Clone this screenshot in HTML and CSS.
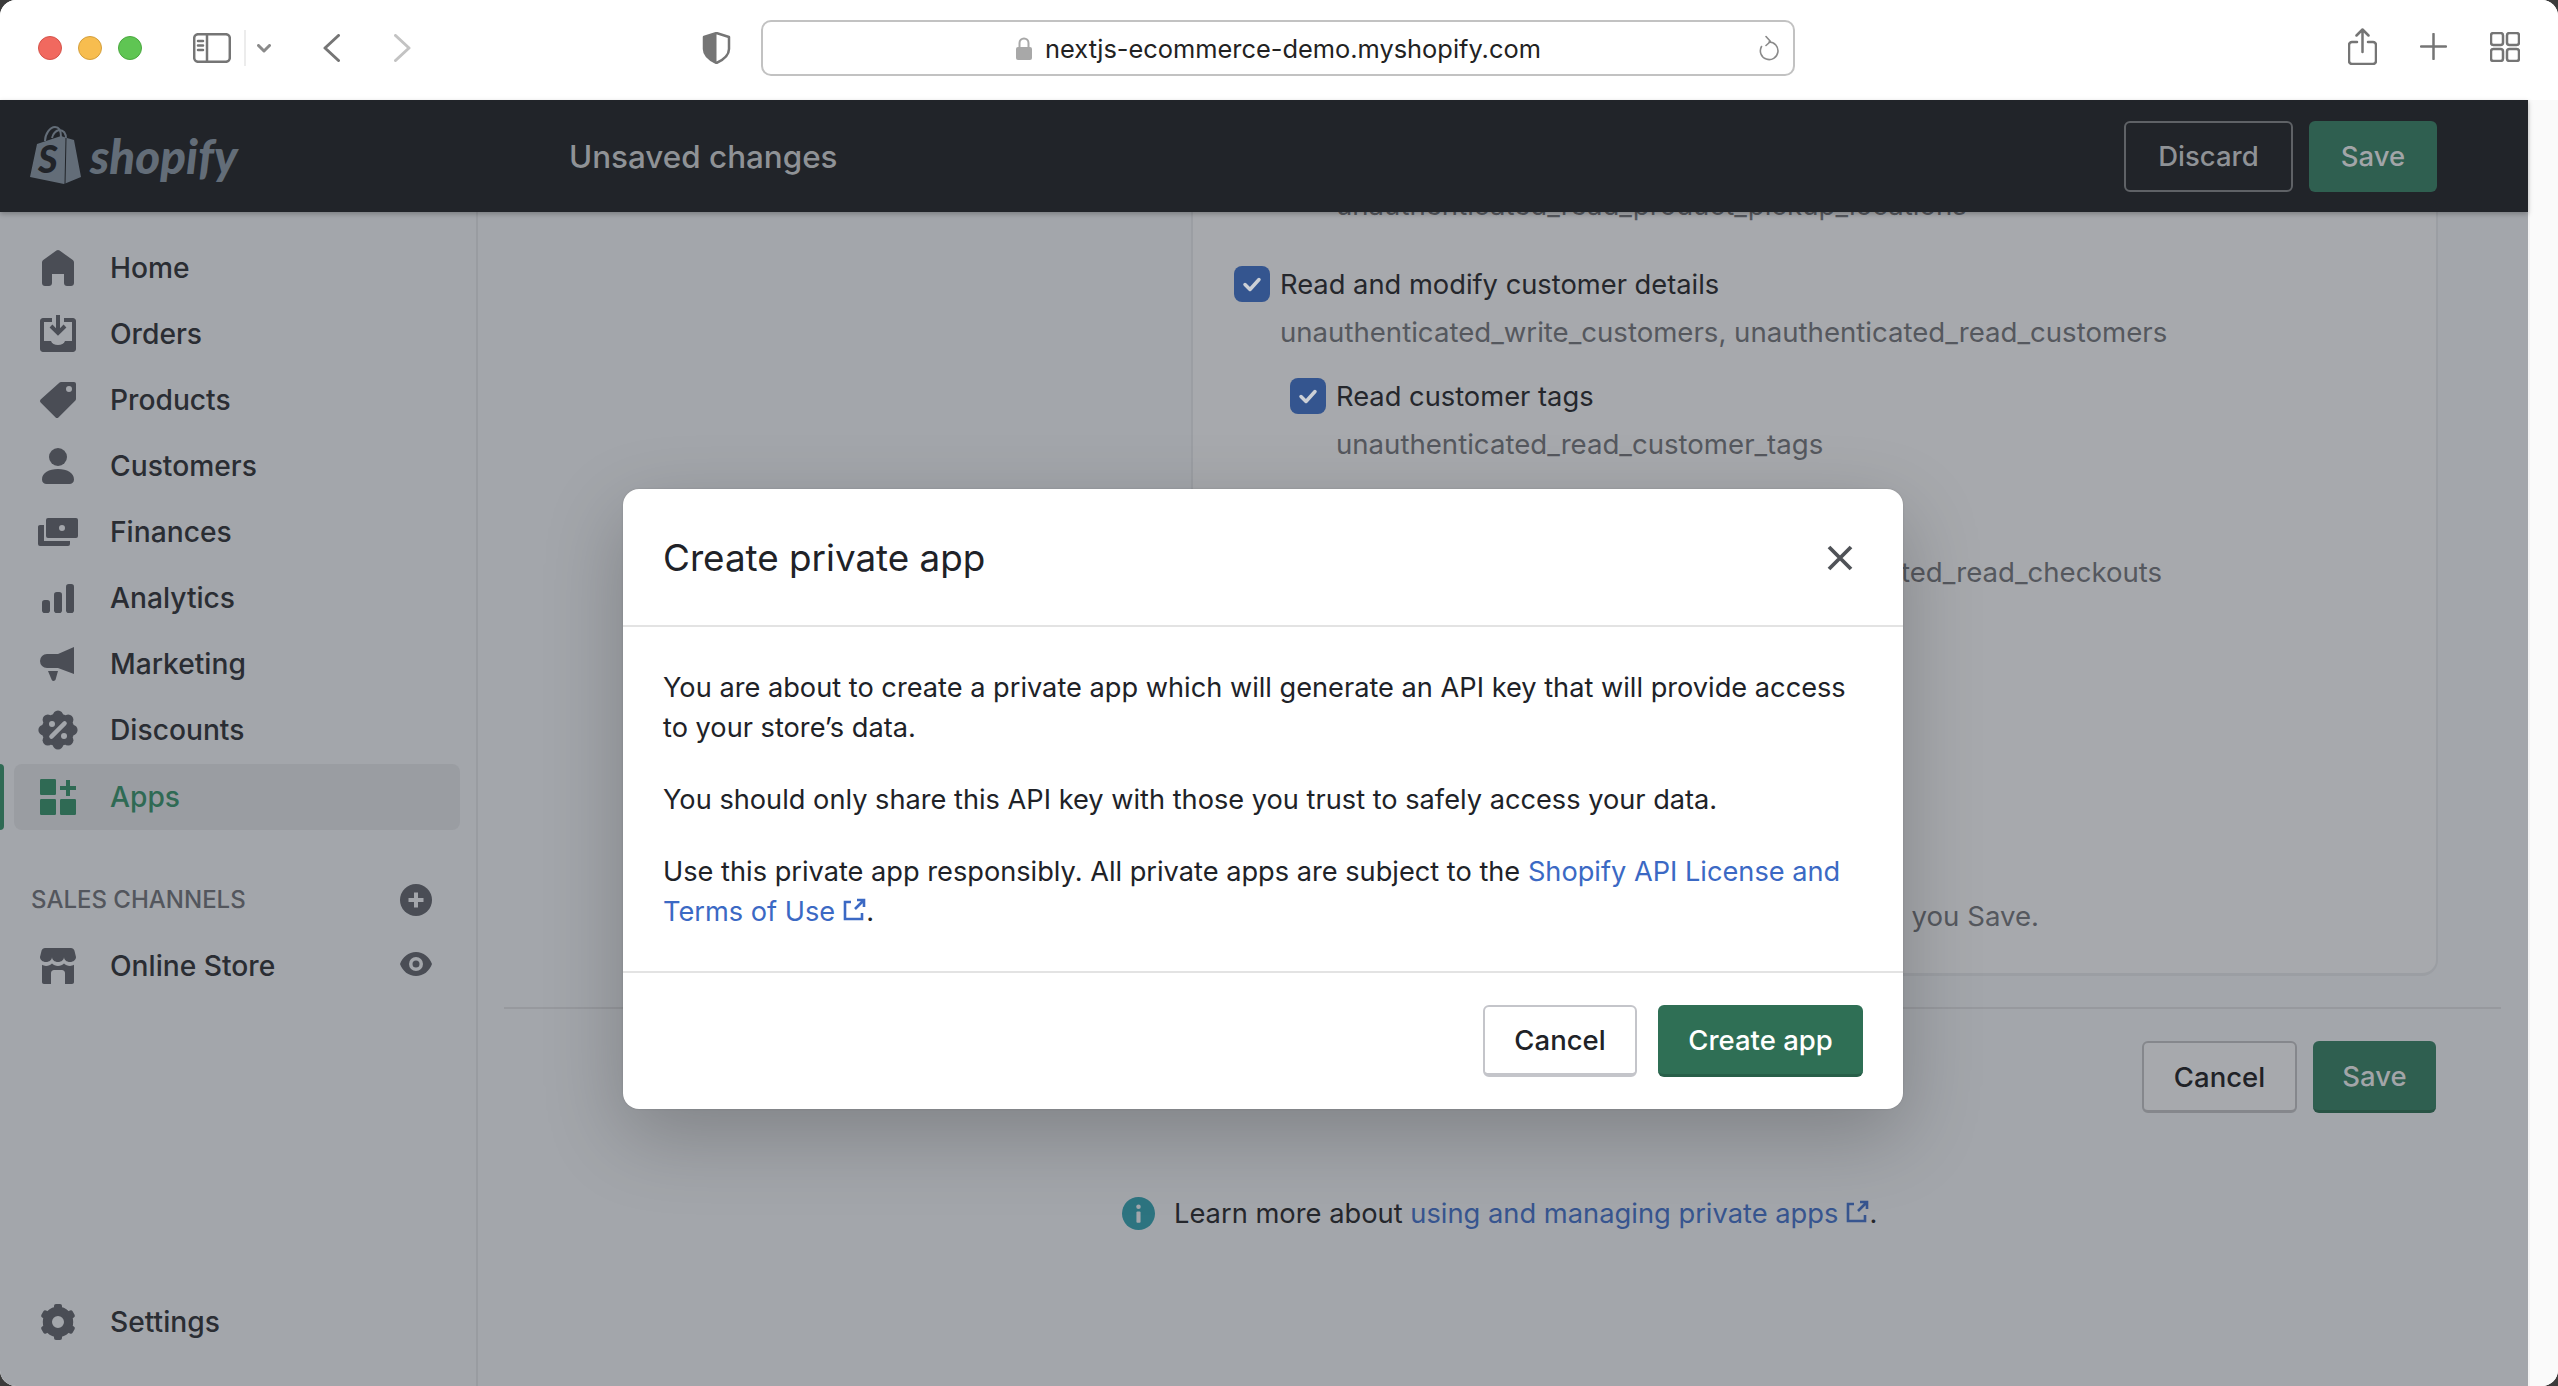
FILE: index.html
```html
<!DOCTYPE html>
<html lang="en">
<head>
  <meta charset="UTF-8" />
  <title>Create private app</title>
  <link rel="stylesheet" href="styles.css">
</head>
<body>
<div class="window">

  <!-- Safari toolbar -->
  <header class="toolbar">
    <div class="lights">
      <span class="light red"></span>
      <span class="light yellow"></span>
      <span class="light green"></span>
    </div>
    <svg class="tb-sidebar" viewBox="0 0 38 30"><rect x="1.2" y="1.2" width="35.6" height="27.6" rx="4"/><path d="M14 1.2v27.6M5 8h5M5 12.500h5M5 17h5"/></svg>
    <span class="tb-divider"></span>
    <svg class="tb-caret" viewBox="0 0 14 9"><path d="M1.500 1.500 7 7l5.500-5.500"/></svg>
    <svg class="tb-back" viewBox="0 0 17 28"><path d="M15.500 1.500 2 14l13.500 12.500"/></svg>
    <svg class="tb-forward" viewBox="0 0 17 28"><path d="M1.500 1.500 15 14 1.500 26.500"/></svg>
    <svg class="tb-shield" viewBox="0 0 29 32"><path class="shield-fill" d="M14.500 1 2 5v12c0 6 6 11 12.500 14z"/><path d="M14.500 1 27 5v12c0 6-6 11-12.500 14C8 28 2 23 2 17V5z"/></svg>
    <div class="urlbar">
      <div class="url">
        <svg class="url-lock" viewBox="0 0 16 23"><path class="lock-loop" d="M3.500 11V6a4.500 4.500 0 0 1 9 0v5"/><rect y="10" width="16" height="13" rx="2"/></svg>
        <span>nextjs-ecommerce-demo.myshopify.com</span>
      </div>
      <svg class="url-reload" viewBox="0 0 20 26"><path d="M10 7A8.800 8.800 0 1 1 2.500 11.500M7 1.500 11.500 6.500 7 10.500"/></svg>
    </div>
    <div class="tb-right">
      <svg class="tb-share" viewBox="0 0 29 37"><path d="M9 14H4a3 3 0 0 0-3 3v16a3 3 0 0 0 3 3h21a3 3 0 0 0 3-3V17a3 3 0 0 0-3-3h-5M14.500 24V2M8.500 7.500l6-6 6 6"/></svg>
      <svg class="tb-plus" viewBox="0 0 27 27"><path d="M13.500 1v25M1 13.500h25"/></svg>
      <svg class="tb-tabs" viewBox="0 0 30 30"><rect x="1" y="1" width="12" height="12" rx="2.500"/><rect x="17" y="1" width="12" height="12" rx="2.500"/><rect x="1" y="17" width="12" height="12" rx="2.500"/><rect x="17" y="17" width="12" height="12" rx="2.500"/></svg>
    </div>
  </header>

  <div class="page">
    <div class="app">

      <div class="topbar">
        <div class="logo">
          <svg class="logo-bag" viewBox="0 0 51 58">
            <path class="bag-handle" d="M15 15c0-7 5-14 10-14 4 0 6 4 6 10M22 12c1-4 3-7 7-8 5 0 7 4 7 9"/>
            <path class="bag-body" d="M7 18 31 10l6 2 7 2 7 37-17 7L0 51z"/>
            <path class="bag-seam" d="M36 12l-1 46"/>
            <text class="bag-s" x="8" y="47">S</text>
          </svg>
          <span class="logo-word">shopify</span>
        </div>
        <span class="topbar-title">Unsaved changes</span>
        <div class="topbar-actions">
          <button class="btn-discard">Discard</button>
          <button class="btn-save-top">Save</button>
        </div>
      </div>

      <div class="frame">
        <nav class="sidebar">
          <ul class="nav-list">
            <li class="nav-item">
              <svg class="icon" viewBox="0 0 20 20"><path d="M18 7.261V17.500c0 .841-.672 1.500-1.500 1.500h-2c-.828 0-1.500-.659-1.500-1.500V13H7v4.477C7 18.318 6.328 19 5.500 19h-2c-.828 0-1.500-.682-1.500-1.523V7.261a1.500 1.500 0 0 1 .615-1.210l6.590-4.820a1.481 1.481 0 0 1 1.590 0l6.590 4.820A1.500 1.500 0 0 1 18 7.260z"/></svg>
              Home
            </li>
            <li class="nav-item">
              <svg class="icon" viewBox="0 0 20 20"><path d="M2.500 2H7v2H3v9.500h3.500c.4 1.200 1.800 2 3.500 2s3.100-.8 3.500-2H17V4h-4V2h4.500c.8 0 1.500.7 1.500 1.500v14c0 .8-.7 1.500-1.500 1.500h-15C1.700 19 1 18.300 1 17.500v-14C1 2.700 1.700 2 2.500 2z"/><path d="M9 .5h2v6.600l1.800-1.800 1.400 1.400L10 10.900 5.800 6.700l1.400-1.400L9 7.100z"/></svg>
              Orders
            </li>
            <li class="nav-item">
              <svg class="icon" viewBox="0 0 20 20"><path fill-rule="evenodd" d="M18 1h-6.500a1 1 0 0 0-.7.300L1.300 9.800a1 1 0 0 0 0 1.400l7.500 7.500a1 1 0 0 0 1.400 0l8.500-8.500a1 1 0 0 0 .3-.7V2a1 1 0 0 0-1-1zm-2.500 5a1.500 1.500 0 1 1 0-3 1.500 1.500 0 0 1 0 3z"/></svg>
              Products
            </li>
            <li class="nav-item">
              <svg class="icon" viewBox="0 0 20 20"><circle cx="10" cy="5.500" r="4.500"/><path d="M10 11.500c-4.500 0-8 2-8 5.200C2 18.100 3 19 4.300 19h11.400c1.300 0 2.300-.9 2.300-2.300 0-3.200-3.500-5.200-8-5.200z"/></svg>
              Customers
            </li>
            <li class="nav-item">
              <svg class="icon" viewBox="0 0 20 20"><path fill-rule="evenodd" d="M5 3h14a1 1 0 0 1 1 1v8a1 1 0 0 1-1 1H5a1 1 0 0 1-1-1V4a1 1 0 0 1 1-1zm7 6.500a1.500 1.500 0 1 0 0-3 1.500 1.500 0 0 0 0 3z"/><path d="M0 7.500c0-.6.400-1 1-1h2v8h13v1.500a1 1 0 0 1-1 1H1a1 1 0 0 1-1-1z"/></svg>
              Finances
            </li>
            <li class="nav-item">
              <svg class="icon" viewBox="0 0 20 20"><rect x="2" y="11" width="4" height="6.500" rx="1.400"/><rect x="8" y="7" width="4" height="10.500" rx="1.400"/><rect x="14" y="3" width="4" height="14.500" rx="1.400"/></svg>
              Analytics
            </li>
            <li class="nav-item">
              <svg class="icon" viewBox="0 0 20 20"><path d="M18 1.500V15l-8-3H4.500a3.500 3.500 0 0 1 0-7H10z"/><path d="M5 13.500h5l-1.200 4.300c-.2.7-1.500 1-1.900.2z"/></svg>
              Marketing
            </li>
            <li class="nav-item">
              <svg class="icon" viewBox="0 0 20 20">
                <circle cx="10" cy="10" r="8.200"/>
                <circle cx="10" cy="2.800" r="2.600"/><circle cx="15.100" cy="4.900" r="2.600"/><circle cx="17.200" cy="10" r="2.600"/><circle cx="15.100" cy="15.100" r="2.600"/>
                <circle cx="10" cy="17.200" r="2.600"/><circle cx="4.900" cy="15.100" r="2.600"/><circle cx="2.800" cy="10" r="2.600"/><circle cx="4.900" cy="4.900" r="2.600"/>
                <path class="cut-line" d="M13.300 6.700l-6.600 6.600"/>
                <circle class="cut" cx="7" cy="7" r="1.500"/><circle class="cut" cx="13" cy="13" r="1.500"/>
              </svg>
              Discounts
            </li>
            <li class="nav-item active">
              <svg class="icon" viewBox="0 0 20 20"><rect x="1" y="1" width="8" height="8" rx=".6"/><rect x="1" y="11" width="8" height="8" rx=".6"/><rect x="11" y="11" width="8" height="8" rx=".6"/><path d="M14 1.500h2V4.500h3v2h-3v3h-2v-3h-3v-2h3z"/></svg>
              Apps
            </li>
          </ul>

          <div class="channels-head">
            <span>SALES CHANNELS</span>
            <svg class="side-icon" viewBox="0 0 32 32"><circle cx="16" cy="16" r="16"/><path class="cut-line" d="M16 8.500v15M8.500 16h15"/></svg>
          </div>
          <div class="nav-item channel">
            <svg class="icon" viewBox="0 0 20 20"><path d="M3.500 1h13c.8 0 1.400.5 1.700 1.200L19 5.500C19 6.900 17.700 8 16 8s-3-1.100-3-2.500C13 6.900 11.700 8 10 8S7 6.900 7 5.500C7 6.900 5.700 8 4 8S1 6.900 1 5.500l.8-3.300C2.100 1.500 2.700 1 3.500 1z"/><path d="M2 9.400c.6.300 1.300.6 2 .6 1.200 0 2.300-.5 3-1.200.7.7 1.800 1.200 3 1.200s2.300-.5 3-1.200c.7.7 1.800 1.200 3 1.200.7 0 1.400-.3 2-.6V18c0 .6-.4 1-1 1h-3.500v-5.500c0-.8-.7-1.500-1.500-1.500H8c-.8 0-1.500.7-1.500 1.500V19H3c-.6 0-1-.4-1-1z"/></svg>
            Online Store
            <svg class="side-icon eye" viewBox="0 0 32 24"><path fill-rule="evenodd" d="M16 0C8.500 0 2.500 5 0 12c2.500 7 8.500 12 16 12s13.500-5 16-12C29.500 5 23.500 0 16 0zm0 19a7 7 0 1 1 0-14 7 7 0 0 1 0 14zm0-3.500a3.500 3.500 0 1 0 0-7 3.500 3.500 0 0 0 0 7z"/></svg>
          </div>

          <div class="nav-item settings">
            <svg class="icon" viewBox="0 0 20 20">
              <circle class="gear-ring" cx="10" cy="10" r="5.300"/>
              <rect x="8" y="1" width="4" height="4" rx="1"/><rect x="8" y="15" width="4" height="4" rx="1"/>
              <rect x="8" y="1" width="4" height="4" rx="1" transform="rotate(60 10 10)"/><rect x="8" y="15" width="4" height="4" rx="1" transform="rotate(60 10 10)"/>
              <rect x="8" y="1" width="4" height="4" rx="1" transform="rotate(120 10 10)"/><rect x="8" y="15" width="4" height="4" rx="1" transform="rotate(120 10 10)"/>
            </svg>
            Settings
          </div>
        </nav>

        <main class="content">
          <section class="card">
            <p class="scope nested">unauthenticated_read_product_pickup_locations</p>

            <label class="check-row gap-first"><span class="checkbox"><svg viewBox="0 0 36 36"><path d="M11 18.500l5 5 9-10"/></svg></span>Read and modify customer details</label>
            <p class="scope">unauthenticated_write_customers, unauthenticated_read_customers</p>

            <label class="check-row nested-check"><span class="checkbox"><svg viewBox="0 0 36 36"><path d="M11 18.500l5 5 9-10"/></svg></span>Read customer tags</label>
            <p class="scope nested">unauthenticated_read_customer_tags</p>

            <p class="scope checkouts">unauthenticated_write_checkouts, unauthenticated_read_checkouts</p>

            <p class="scope save-note">when you Save.</p>
          </section>

          <div class="form-actions">
            <button class="btn btn-ghost">Cancel</button>
            <button class="btn btn-save">Save</button>
          </div>

          <p class="learn">
            <svg class="info" viewBox="0 0 32 32"><circle cx="16" cy="16" r="16"/><circle class="info-mark" cx="16" cy="9.500" r="2.200"/><rect class="info-mark" x="14" y="14" width="4" height="11" rx="1"/></svg>
            Learn more about&nbsp;<a class="link-dim">using and managing private apps<svg class="ext" viewBox="0 0 24 24"><path d="M9 4H3v17h17v-6M13 11 21.500 2.500M15 2h7v7"/></svg></a>.
          </p>
        </main>
      </div>
    </div>
    <div class="scrollbar"></div>
  </div>

  <!-- Modal -->
  <div class="modal">
    <div class="modal-head">
      <h2>Create private app</h2>
      <svg class="modal-close" viewBox="0 0 26 26"><path d="M2 2l22 22M24 2 2 24"/></svg>
    </div>
    <div class="modal-body">
      <p>You are about to create a private app which will generate an API key that will provide access to your store’s data.</p>
      <p>You should only share this API key with those you trust to safely access your data.</p>
      <p>Use this private app responsibly. All private apps are subject to the <a class="link">Shopify API License and</a><br><a class="link">Terms of Use<svg class="ext" viewBox="0 0 24 24"><path d="M9 4H3v17h17v-6M13 11 21.500 2.500M15 2h7v7"/></svg></a>.</p>
    </div>
    <div class="modal-foot">
      <button class="btn btn-cancel">Cancel</button>
      <button class="btn btn-create">Create app</button>
    </div>
  </div>

</div>
</body>
</html>
```

FILE: styles.css
```css
/* === Reset === */
* { margin:0; padding:0; box-sizing:border-box; }
html, body { width:100%; height:100%; background:#3b3b3b; overflow:hidden; }
body { font-family: Inter, "Liberation Sans", sans-serif; font-size:27px; color:#202227; }
button { font-family:inherit; cursor:pointer; }
ul { list-style:none; }

.window {
  position:relative;
  width:100%; height:100%;
  border-radius:16px;
  overflow:hidden;
  display:flex; flex-direction:column;
  background:#fff;
}

/* === Toolbar === */
.toolbar {
  height:100px; flex:none;
  display:flex; align-items:center;
  background:#fff;
  padding-left:38px;
  fill:none; stroke:#757575;
}
.lights { display:flex; gap:16px; margin-right:51px; margin-top:-4px; }
.light { width:24px; height:24px; border-radius:50%; border:1px solid; }
.red { background:#f1695f; border-color:#d5534a; }
.yellow { background:#f7bd4f; border-color:#d49f3c; }
.green { background:#5fc553; border-color:#4aa83f; }
.toolbar svg { flex:none; stroke-width:2.500; stroke-linecap:round; stroke-linejoin:round; margin-top:-4px; }
.tb-sidebar { width:38px; height:30px; }
.tb-divider { width:2px; height:36px; background:#ececec; margin:-4px 0 0 13px; }
.toolbar .tb-caret { width:14px; height:9px; margin-left:11px; stroke-width:3; stroke:#8a8a8a; }
.toolbar .tb-back { width:17px; height:28px; margin-left:52px; stroke-width:3; }
.toolbar .tb-forward { width:17px; height:28px; margin-left:54px; stroke:#c3c3c3; stroke-width:3; }
.tb-shield { width:29px; height:32px; margin-left:291px; }
.shield-fill { fill:#757575; stroke:none; }
.urlbar {
  width:1034px; height:56px;
  margin:-4px 0 0 30px;
  border:2px solid #c2c2c2;
  border-radius:10px;
  display:flex; align-items:center;
  padding-right:14px;
  stroke:#8a8a8a;
}
.url { flex:1; display:flex; align-items:center; justify-content:center; gap:13px; padding-left:35px; color:#222; font-size:25.400px; }
.toolbar .url-lock { width:16px; height:23px; margin-top:0; fill:#a8a8a8; stroke:none; }
.toolbar .lock-loop { fill:none; stroke:#a8a8a8; stroke-width:2; }
.toolbar .url-reload { width:20px; height:26px; margin-top:0; stroke-width:1.600; }
.tb-right { margin-left:auto; display:flex; align-items:center; gap:43px; padding-right:38px; }
.toolbar .tb-share { width:29px; height:37px; margin-top:-8px; }
.toolbar .tb-plus { width:27px; height:27px; margin-top:-8px; }
.toolbar .tb-tabs { width:30px; height:30px; margin-top:-6px; }

/* === Layout === */
.page { flex:1; display:flex; min-height:0; }
.app { flex:1; display:flex; flex-direction:column; min-width:0; }
.scrollbar { width:30px; flex:none; background:#fafafa; border-left:2px solid #f3f3f3; }
.frame { flex:1; display:flex; min-height:0; background:#a3a6ab; }

/* === Topbar === */
.topbar {
  position:relative; z-index:2;
  height:112px; flex:none;
  display:flex; align-items:center;
  background:#212429;
  box-shadow:0 2px 5px rgba(0,0,0,.25);
  padding-right:91px;
}
.logo { width:569px; display:flex; align-items:center; padding-left:30px; color:#636d78; }
.logo-bag { width:51px; height:58px; flex:none; margin-top:-2px; }
.bag-handle { fill:none; stroke:#636d78; stroke-width:2; }
.bag-body { fill:#636d78; }
.bag-seam { fill:none; stroke:#212429; stroke-width:1; }
.bag-s { font:italic 900 38px Lato, sans-serif; fill:#212429; }
.logo-word { margin-left:9px; font:italic 900 47.500px Lato, sans-serif; line-height:1; }
.topbar-title { padding-top:2px; font-size:31.400px; font-weight:500; color:#8f9296; }
.topbar-actions { margin-left:auto; display:flex; gap:16px; }
.topbar-actions button { height:71px; border-radius:6px; font-size:27.500px; font-weight:500; }
.btn-discard { width:169px; background:transparent; border:2px solid #5f6266; color:#8f9296; }
.btn-save-top { width:128px; background:#2f5f50; border:none; color:#a2a5a8; }

/* === Sidebar === */
.sidebar {
  width:478px; flex:none;
  display:flex; flex-direction:column;
  padding-top:23px;
  border-right:2px solid #999ca1;
}
.nav-item {
  position:relative;
  height:66px;
  margin:0 16px 0 14px;
  padding-left:24px;
  display:flex; align-items:center; gap:32px;
  font-size:28.200px; font-weight:500; color:#2a2d33;
}
.nav-list .nav-item:nth-child(n+7) { height:66.300px; }
.icon { width:40px; height:40px; flex:none; fill:#4a4d55; }
.cut { fill:#a3a6ab; }
.cut-line { fill:none; stroke:#a3a6ab; stroke-width:2.200; stroke-linecap:round; }
.gear-ring { fill:none; stroke:#4a4d55; stroke-width:4.600; }
.nav-list .active { background:#9a9da2; border-radius:8px; color:#2f6a54; height:63px; }
.active::before {
  content:""; position:absolute; left:-14px; top:0; bottom:0;
  width:4px; background:#2f6a54; border-radius:0 4px 4px 0;
}
.active .icon { fill:#2f6a54; }
.channels-head {
  display:flex; align-items:center; justify-content:space-between;
  margin-top:54px;
  padding:0 44px 0 31px;
  height:32px;
  font-size:24px; font-weight:500; color:#53565d;
}
.side-icon { width:32px; height:32px; fill:#4a4d55; flex:none; }
.side-icon .cut-line { stroke-width:4; stroke-linecap:butt; }
.channel { margin-top:17px; }
.eye { height:24px; margin-left:auto; margin-right:28px; margin-top:-4px; }
.settings { margin-top:auto; margin-bottom:31px; }

/* === Content behind the modal === */
.content { flex:1; min-width:0; }
.card {
  margin:-30px 90px 0 713px;
  padding:3px 40px 37px 41px;
  background:#a7a9ad;
  border:solid #9b9ea3; border-width:0 2px 3px 2px;
  border-radius:0 0 16px 16px;
  color:#202227;
}
.scope { line-height:40px; padding-left:46px; color:#55585e; font-size:27.600px; }
.scope.nested { padding-left:102px; }
.check-row { display:flex; align-items:center; gap:10px; height:36px; color:#25272c; font-size:27.300px; }
.gap-first { margin-top:41px; }
.check-row + .scope { margin-top:10px; }
.nested-check { margin:26px 0 0 56px; }
.checkbox { width:36px; height:36px; flex:none; border-radius:8px; background:#34558f; }
.checkbox svg { display:block; width:36px; height:36px; fill:none; stroke:#ccd0d6; stroke-width:3.500; stroke-linecap:round; stroke-linejoin:round; }
.checkouts { margin-top:88px; }
.scope.save-note { margin-top:304px; padding-right:357px; text-align:right; }

.form-actions {
  margin:31px 27px 0 26px;
  padding:32px 65px 0 0;
  border-top:2px solid #97999e;
  display:flex; justify-content:flex-end; gap:16px;
}
.btn { height:72px; border-radius:6px; font-size:27.500px; font-weight:500; }
.btn-ghost { width:155px; background:#a7a9ad; border:2px solid #85878c; border-bottom-width:3px; color:#202227; }
.btn-save { width:123px; background:#2f5f50; border:none; border-bottom:3px solid #295345; color:#a2a5a8; }

.learn {
  margin-top:80px; padding-left:644px;
  display:flex; align-items:center;
  height:40px; color:#25272c; font-size:27.300px;
}
.info { width:33px; height:33px; flex:none; margin-right:19px; fill:#2d7480; }
.info-mark { fill:#a3a6ab; }
.link-dim { color:#37558f; }
.link { color:#3b69c4; }
.ext { width:24px; height:24px; margin-left:7px; vertical-align:-1px; fill:none; stroke:currentColor; stroke-width:2.600; }

/* === Modal === */
.modal {
  position:absolute; z-index:5;
  left:623px; top:489px; width:1280px;
  background:#fff;
  border-radius:16px;
  box-shadow:0 26px 80px rgba(0,0,0,.22), 0 0 2px rgba(0,0,0,.15);
}
.modal-head {
  height:138px;
  padding:1px 50px 0 40px;
  display:flex; align-items:center; justify-content:space-between;
  border-bottom:2px solid #e3e3e3;
}
.modal-head h2 { font-size:36.800px; font-weight:400; color:#202227; }
.modal-close { width:26px; height:26px; fill:none; stroke:#4f5257; stroke-width:3.800; }
.modal-body { padding:41px 40px 39px; display:flex; flex-direction:column; gap:32px; font-size:27.200px; }
.modal-body p { line-height:40px; color:#202227; }
.modal-foot {
  padding:32px 40px 32px;
  border-top:2px solid #e3e3e3;
  display:flex; justify-content:flex-end; gap:21px;
}
.btn-cancel { width:154px; background:#fff; border:2px solid #c4c5ca; border-bottom-width:4px; color:#202227; }
.btn-create { width:205px; background:#2f6f55; border:none; border-bottom:3px solid #285f49; color:#fff; }
```
